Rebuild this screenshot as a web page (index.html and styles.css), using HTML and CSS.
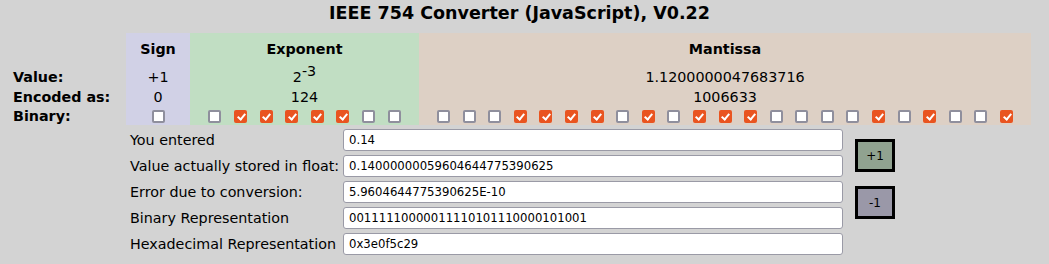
FILE: index.html
```html
<!DOCTYPE html>
<html>
<head>
  <meta charset="utf-8">
  <title>IEEE 754 Converter</title>
  <link rel="stylesheet" href="styles.css">
</head>
<body>

<div class="page">
  <h1 class="title">IEEE 754 Converter (JavaScript), V0.22</h1>

  <!-- bit table: one column per field so the colours run unbroken -->
  <div class="fields">
    <div class="col labels">
      <div class="head"></div>
      <div class="row r-value">Value:</div>
      <div class="row">Encoded as:</div>
      <div class="row">Binary:</div>
    </div>

    <div class="col sign">
      <div class="head">Sign</div>
      <div class="row r-value">+1</div>
      <div class="row">0</div>
      <div class="row bits">
        <input type="checkbox">
      </div>
    </div>

    <div class="col exponent">
      <div class="head">Exponent</div>
      <div class="row r-value">2<sup>-3</sup></div>
      <div class="row">124</div>
      <div class="row bits">
        <input type="checkbox">
        <input type="checkbox" checked>
        <input type="checkbox" checked>
        <input type="checkbox" checked>
        <input type="checkbox" checked>
        <input type="checkbox" checked>
        <input type="checkbox">
        <input type="checkbox">
      </div>
    </div>

    <div class="col mantissa">
      <div class="head">Mantissa</div>
      <div class="row r-value">1.1200000047683716</div>
      <div class="row">1006633</div>
      <div class="row bits">
        <input type="checkbox">
        <input type="checkbox">
        <input type="checkbox">
        <input type="checkbox" checked>
        <input type="checkbox" checked>
        <input type="checkbox" checked>
        <input type="checkbox" checked>
        <input type="checkbox">
        <input type="checkbox" checked>
        <input type="checkbox">
        <input type="checkbox" checked>
        <input type="checkbox" checked>
        <input type="checkbox" checked>
        <input type="checkbox">
        <input type="checkbox">
        <input type="checkbox">
        <input type="checkbox">
        <input type="checkbox" checked>
        <input type="checkbox">
        <input type="checkbox" checked>
        <input type="checkbox">
        <input type="checkbox">
        <input type="checkbox" checked>
      </div>
    </div>
  </div>

  <div class="results">
    <label class="lbl" for="entered">You entered</label>
    <input class="field" id="entered" type="text" value="0.14">

    <div class="steps">
      <button class="step plus">+1</button>
      <button class="step minus">-1</button>
    </div>

    <label class="lbl" for="stored">Value actually stored in float:</label>
    <input class="field" id="stored" type="text" value="0.14000000059604644775390625">

    <label class="lbl" for="error">Error due to conversion:</label>
    <input class="field" id="error" type="text" value="5.9604644775390625E-10">

    <label class="lbl" for="binary">Binary Representation</label>
    <input class="field" id="binary" type="text" value="00111110000011110101110000101001">

    <label class="lbl" for="hex">Hexadecimal Representation</label>
    <input class="field" id="hex" type="text" value="0x3e0f5c29">
  </div>
</div>

</body>
</html>
```

FILE: styles.css
```css
body {
  margin: 0;
  background-color: #d3d3d3;
  color: #000;
  font-family: "DejaVu Sans", sans-serif;
  font-size: 14.3px;
}

.page {
  width: 1023px;
  padding-left: 8px;
}

.title {
  margin: 2px 0 9px 0;
  font-size: 17.5px;
  line-height: 22px;
  text-align: center;
}

/* bit table */
.fields {
  display: flex;
  height: 92px;
}

.col {
  display: flex;
  flex-direction: column;
  text-align: center;
}

.labels {
  width: 118px;
  text-align: left;
  font-weight: bold;
}

.labels .row {
  padding-left: 5px;
}

.sign {
  width: 64px;
  background-color: #d1d1e6;
}

.exponent {
  width: 229px;
  background-color: #c1dec3;
}

.mantissa {
  width: 612px;
  background-color: #ddd0c5;
}

.head {
  height: 34px;
  padding-top: 6px;
  box-sizing: border-box;
  line-height: 20px;
  font-weight: bold;
}

.row {
  height: 19px;
  line-height: 20px;
  white-space: nowrap;
}

.row.r-value {
  height: 20px;
}

.row sup {
  font-size: 14.3px;
  line-height: 0;
  vertical-align: 6px;
}

.bits {
  display: flex;
  justify-content: center;
  align-items: flex-start;
  gap: 12.6px;
  padding-top: 4px;
  box-sizing: border-box;
}

.bits input {
  appearance: none;
  -webkit-appearance: none;
  margin: 0;
  width: 13px;
  height: 13px;
  box-sizing: border-box;
  border: 2px solid #8f8f9d;
  border-radius: 2px;
  background-color: #fff;
  position: relative;
  flex: none;
}

.bits input:checked {
  border-color: #e95420;
  background-color: #e95420;
}

.bits input:checked::before {
  content: '';
  position: absolute;
  left: 2.5px;
  top: 0px;
  width: 3px;
  height: 6px;
  border-right: 2px solid #fff;
  border-bottom: 2px solid #fff;
  transform: rotate(40deg);
}

/* conversion results */
.results {
  display: grid;
  grid-template-columns: 201px 500px 40px;
  grid-auto-rows: 22px;
  row-gap: 4px;
  column-gap: 12px;
  margin: 4px 0 0 122px;
  align-items: center;
}

.lbl {
  grid-column: 1;
  white-space: nowrap;
}

.field {
  grid-column: 2;
  height: 22px;
  box-sizing: border-box;
  margin: 0;
  padding: 0 5px;
  border: 1px solid #9a9aa6;
  border-radius: 3px;
  background-color: #fff;
  color: #000;
  font-family: "DejaVu Sans", sans-serif;
  font-size: 11.7px;
}

.steps {
  grid-column: 3;
  grid-row: 1 / span 5;
  align-self: start;
  display: flex;
  flex-direction: column;
  gap: 14px;
  padding-top: 10px;
}

.step {
  width: 40px;
  height: 33px;
  margin: 0;
  padding: 0;
  border: 3px solid #000;
  border-radius: 0;
  font-family: "DejaVu Sans", sans-serif;
  font-size: 12px;
  color: #000;
}

.plus {
  background-color: #90a290;
}

.minus {
  background-color: #9a98a8;
}
```
